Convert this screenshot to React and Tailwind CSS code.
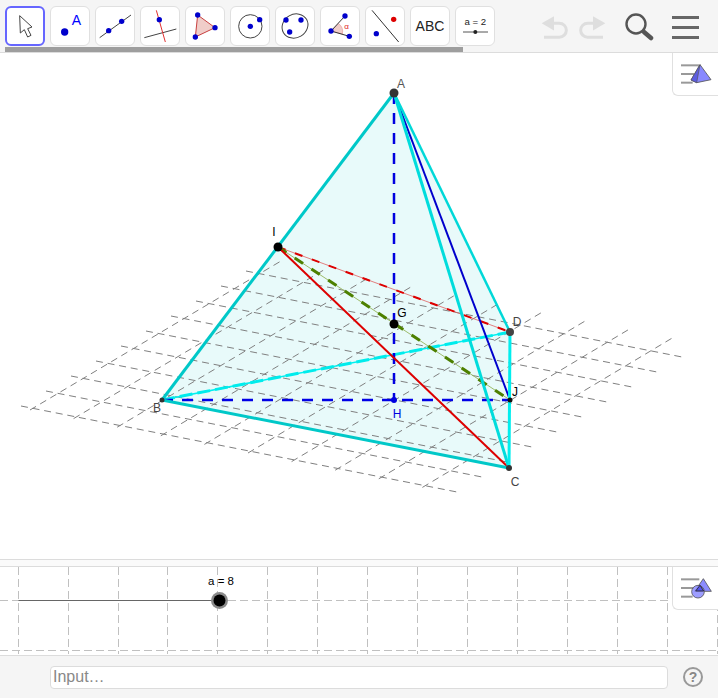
import React from "react";

const A = [394, 93];
const B = [162, 400];
const C = [509, 468];
const D = [510, 332];
const J = [510, 400];
const H = [394, 400];
const G = [394, 324];
const I = [278, 247];

const range = [0, 1, 2, 3, 4, 5, 6, 7, 8, 9];

const Seg = ({ from, to, color, w = 1, dash }) => (
  <line x1={from[0]} y1={from[1]} x2={to[0]} y2={to[1]} stroke={color} strokeWidth={w} strokeDasharray={dash} />
);

const Dot = ({ at, r, color }) => <circle cx={at[0]} cy={at[1]} r={r} fill={color} />;

const Label = ({ x, y, color, children }) => (
  <text x={x} y={y} fill={color} fontSize="12" textAnchor="middle">
    {children}
  </text>
);

// the pyramid with its floor grid, in page pixels minus the toolbar height
const Scene = () => (
  <svg className="block w-[718px] h-[506px] font-['Liberation_Sans',sans-serif]" viewBox="0 53 718 506">
    <polygon points="394,93 162,400 509,468 510,332" fill="#e8fafa" />
    {range.map((i) => (
      <line key={i} x1={21 + 25 * i} y1={406 - 15 * i} x2={457 + 25 * i} y2={492 - 15 * i} stroke="#808080" strokeDasharray="7 4.8" />
    ))}
    {range.map((j) => (
      <line key={j} x1={30 + 43.6 * j} y1={410 + 8.6 * j} x2={281 + 43.4 * j} y2={261 + 8.6 * j} stroke="#808080" strokeDasharray="7 4.8" />
    ))}
    <Seg from={B} to={D} color="#00f0f0" w={1.5} />
    <Seg from={B} to={D} color="#00ecec" w={3} dash="13 5" />
    <Seg from={A} to={H} color="#0000e0" w={2.5} dash="11 9" />
    <Seg from={B} to={J} color="#0000e6" w={2.5} dash="11 9" />
    <Seg from={I} to={D} color="#e06060" w={0.8} />
    <Seg from={I} to={D} color="#dd0000" w={2} dash="8 10" />
    <Seg from={I} to={J} color="#9dbb6a" w={1} />
    <Seg from={I} to={J} color="#4d8000" w={3} dash="10 10" />
    <Seg from={A} to={J} color="#0000cc" w={2} />
    <Seg from={I} to={C} color="#dd0000" w={2} />
    <Seg from={A} to={D} color="#00d8d8" w={2.5} />
    <Seg from={A} to={B} color="#00c8c8" w={3} />
    <Seg from={B} to={C} color="#00c8c8" w={3} />
    <Seg from={A} to={C} color="#00dcdc" w={3} />
    <Seg from={C} to={D} color="#00eeee" w={3} />
    <Dot at={A} r={4.5} color="#333333" />
    <Dot at={B} r={2.5} color="#333333" />
    <Dot at={C} r={3} color="#333333" />
    <Dot at={D} r={4} color="#444444" />
    <Dot at={J} r={2.5} color="#111111" />
    <Dot at={H} r={3} color="#0000e0" />
    <Dot at={G} r={4.5} color="#000000" />
    <Dot at={I} r={4.5} color="#000000" />
    <Label x={401} y={88} color="#555555">A</Label>
    <Label x={274} y={236} color="#000000">I</Label>
    <Label x={157} y={412} color="#444444">B</Label>
    <Label x={402} y={317} color="#000000">G</Label>
    <Label x={517} y={326} color="#444444">D</Label>
    <Label x={515} y={396} color="#000000">J</Label>
    <Label x={397} y={418} color="#0000e0">H</Label>
    <Label x={515} y={486} color="#444444">C</Label>
  </svg>
);

const sliderX = [18.5, 68.5, 118.5, 167.5, 217.5, 267.5, 317.5, 367.5, 417.5, 467.5, 517.5, 567.5, 617.5, 667.5, 717.5];

const SliderGrid = () => (
  <svg className="block w-[718px] h-[88px] font-['Liberation_Sans',sans-serif]" viewBox="0 567 718 88">
    {sliderX.map((x) => (
      <line key={x} x1={x} y1={567} x2={x} y2={654} stroke="#c0c0c0" strokeDasharray="8 4" />
    ))}
    <line x1={0} y1={600.5} x2={718} y2={600.5} stroke="#c0c0c0" strokeDasharray="8 4" />
    <line x1={0} y1={650.5} x2={718} y2={650.5} stroke="#c0c0c0" strokeDasharray="8 4" />
    <line x1={18.5} y1={600.5} x2={219} y2={600.5} stroke="#666666" />
    <circle cx={219.5} cy={600.5} r={8.5} fill="#8a8a8a" />
    <circle cx={219.5} cy={600.5} r={6} fill="#000000" />
    <text x={221} y={585} fontSize="11.5" fill="#000000" textAnchor="middle">a = 8</text>
  </svg>
);

const P = ({ x, y, r = 8, c = "#0000cc" }) => <circle cx={x} cy={y} r={r} fill={c} />;

// tool icons are sketched in 3x crop coordinates, hence the odd viewBoxes
const tools = [
  {
    box: "14 17 120 120",
    icon: <polygon points="58,46 60,98 72,88 82,110 92,105 82,85 95,80" fill="#fff" stroke="#444" strokeWidth="3" />,
  },
  {
    box: "149 17 120 120",
    icon: (
      <>
        <P x={193} y={95} r={11} />
        <text x={228} y={74} fontSize="42" fill="#0000ff" textAnchor="middle">A</text>
      </>
    ),
  },
  {
    box: "284 17 120 120",
    icon: (
      <>
        <line x1="298" y1="112" x2="392" y2="44" stroke="#444" strokeWidth="3" />
        <P x={325} y={91} />
        <P x={364} y={63} />
      </>
    ),
  },
  {
    box: "419 17 120 120",
    icon: (
      <>
        <line x1="432" y1="112" x2="528" y2="86" stroke="#444" strokeWidth="3" />
        <line x1="468" y1="30" x2="495" y2="125" stroke="#e03030" strokeWidth="3" />
        <P x={477} y={58} />
      </>
    ),
  },
  {
    box: "554 17 120 120",
    icon: (
      <>
        <polygon points="592,44 644,82 585,110" fill="#f0cdc9" stroke="#c84040" strokeWidth="3" />
        <P x={592} y={44} />
        <P x={644} y={82} />
        <P x={585} y={110} />
      </>
    ),
  },
  {
    box: "689 17 120 120",
    icon: (
      <>
        <circle cx="750" cy="78" r="35" fill="none" stroke="#444" strokeWidth="3" />
        <P x={750} y={78} />
        <P x={778} y={58} />
      </>
    ),
  },
  {
    box: "824 17 120 120",
    icon: (
      <>
        <ellipse cx="884" cy="77" rx="40" ry="35" transform="rotate(-30 884 77)" fill="none" stroke="#444" strokeWidth="3" />
        <P x={857} y={59} />
        <P x={902} y={59} />
        <P x={868} y={95} />
      </>
    ),
  },
  {
    box: "959 17 120 120",
    icon: (
      <>
        <path d="M992 92 L1015 70 A30 30 0 0 1 1026 101 Z" fill="#f0cdc9" stroke="#e08080" strokeWidth="1.5" />
        <line x1="992" y1="92" x2="1034" y2="47" stroke="#333" strokeWidth="3" />
        <line x1="992" y1="92" x2="1047" y2="108" stroke="#333" strokeWidth="3" />
        <text x={1039} y={86} fontSize="24" fill="#e02020" textAnchor="middle">α</text>
        <P x={992} y={92} />
        <P x={1034} y={47} />
        <P x={1047} y={108} />
      </>
    ),
  },
  {
    box: "14 17 120 120",
    icon: (
      <>
        <line x1="35" y1="30" x2="115" y2="125" stroke="#333" strokeWidth="3" />
        <P x={100} y={57} c="#dd0000" />
        <P x={48} y={100} />
      </>
    ),
  },
  { box: "149 17 120 120", text: "ABC" },
  {
    box: "284 17 120 120",
    icon: (
      <>
        <text x={345} y={75} fontSize="29" fill="#222" textAnchor="middle">a = 2</text>
        <line x1="308" y1="95" x2="383" y2="95" stroke="#555" strokeWidth="3" />
        <P x={345} y={95} r={6} c="#222" />
      </>
    ),
  },
];

const ToolButton = ({ tool, active }) => (
  <button
    className={
      active
        ? "w-[40px] h-[40px] rounded-[6px] border-2 border-[#6666ff] bg-white overflow-hidden flex items-center justify-center"
        : "w-[40px] h-[40px] rounded-[6px] border border-[#e0e0e0] bg-white overflow-hidden flex items-center justify-center"
    }
  >
    {tool.text ? (
      <span className="text-[14px] text-[#222]">{tool.text}</span>
    ) : (
      <svg className="shrink-0 w-[40px] h-[40px]" viewBox={tool.box}>
        {tool.icon}
      </svg>
    )}
  </button>
);

const UndoIcon = ({ flip }) => (
  <svg className={flip ? "ml-[9px] w-[28px] h-[25px] -scale-x-100" : "w-[28px] h-[25px]"} viewBox="543 44 84 74">
    <polygon points="545,68 582,47 582,90" fill="#dedede" />
    <path d="M575 68 H598 A20 20 0 0 1 598 110 H552" fill="none" stroke="#dedede" strokeWidth="9" />
  </svg>
);

const StyleBarIcon = ({ second }) => (
  <svg className="w-[34px] h-[26px]" viewBox="0 0 102 78">
    <line x1="3" y1="4" x2="58" y2="4" stroke="#999" strokeWidth="6" />
    <line x1="3" y1="30" x2="42" y2="30" stroke="#999" strokeWidth="6" />
    <line x1="3" y1="56" x2="38" y2="56" stroke="#999" strokeWidth="6" />
    {second ? (
      <>
        <polygon points="70,2 94,40 44,40" fill="#8c8cff" stroke="#555" strokeWidth="2.5" />
        <circle cx="54" cy="41" r="19" fill="#8c8cff" fillOpacity="0.85" stroke="#555" strokeWidth="2.5" />
        <polygon points="60,22 71,39 47,39" fill="#5555ee" stroke="#222" strokeWidth="2.5" />
      </>
    ) : (
      <>
        <polygon points="60,2 93,47 50,56 33,48" fill="#8888ff" stroke="#555" strokeWidth="2.5" />
        <polygon points="60,2 50,56 33,48" fill="#5c5ce0" stroke="#555" strokeWidth="2" />
      </>
    )}
  </svg>
);

const StyleTab = ({ second }) => (
  <div className="absolute top-0 right-0 w-[46px] h-[43px] bg-white border-l border-b border-[#e0e0e0] rounded-bl-[6px] flex items-center justify-center pt-[5px] pl-[2px]">
    <StyleBarIcon second={second} />
  </div>
);

export default function App() {
  return (
    <div className="w-[718px] h-[698px] flex flex-col bg-white font-['Liberation_Sans',sans-serif]">
      <header className="relative h-[53px] shrink-0 bg-[#f5f5f5] border-b border-[#dcdcdc] flex items-start pt-[6px] pl-[5px]">
        <div className="flex gap-[5px]">
          {tools.map((tool, i) => (
            <ToolButton key={i} tool={tool} active={i === 0} />
          ))}
        </div>
        <div className="ml-auto flex items-center pt-[6px] pr-[19px]">
          <UndoIcon />
          <UndoIcon flip />
          <svg className="ml-[18px] w-[30px] h-[30px]" viewBox="0 0 30 30">
            <circle cx="12" cy="12" r="9.5" fill="none" stroke="#555" strokeWidth="2.4" />
            <line x1="20" y1="20" x2="27" y2="26" stroke="#555" strokeWidth="4.5" strokeLinecap="round" />
          </svg>
          <div className="ml-[18px] w-[27px] flex flex-col gap-[7px]">
            <div className="h-[3px] bg-[#666]" />
            <div className="h-[3px] bg-[#666]" />
            <div className="h-[3px] bg-[#666]" />
          </div>
        </div>
        <div className="absolute left-[5px] bottom-0 w-[458px] h-[5px] bg-[#9e9e9e]" />
      </header>

      <main className="relative h-[506px] shrink-0">
        <Scene />
        <StyleTab />
      </main>

      <div className="h-[8px] shrink-0 bg-[#fafafa] border-y border-[#dcdcdc]" />

      <section className="relative h-[88px] shrink-0">
        <SliderGrid />
        <StyleTab second />
      </section>

      <footer className="h-[43px] shrink-0 bg-[#f5f5f5] border-t border-[#dcdcdc] flex items-center pl-[50px]">
        <div className="w-[618px] h-[23px] bg-white border border-[#dcdcdc] rounded-[4px] flex items-center pl-[2px] text-[16px] text-[#888]">
          Input…
        </div>
        <div className="ml-[15px] w-[20px] h-[20px] rounded-full border-2 border-[#999] flex items-center justify-center text-[14px] font-bold text-[#888]">
          ?
        </div>
      </footer>
    </div>
  );
}
